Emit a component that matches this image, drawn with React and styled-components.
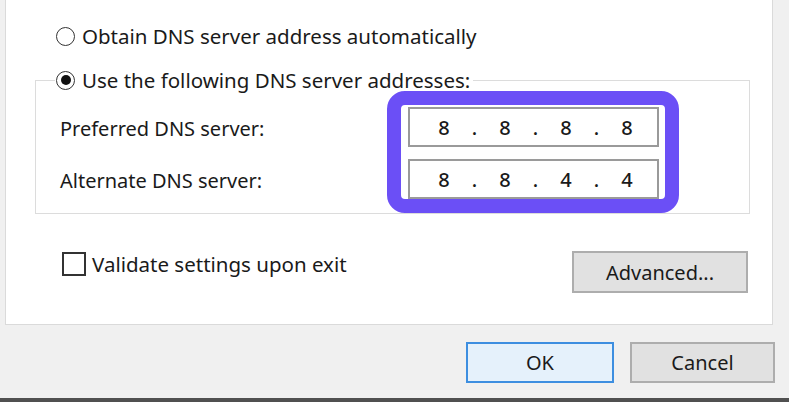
import React from 'react';
import styled, { createGlobalStyle } from 'styled-components';

const GlobalStyle = createGlobalStyle`
    html, body {
        margin: 0;
        padding: 0;
        background: #f0f0f0;
    }
    body {
        font-family: "Noto Sans", "Open Sans", sans-serif;
        color: #1a1a1a;
    }
`;

const Window = styled.div`
    width: 789px;
    height: 402px;
    display: flex;
    flex-direction: column;
    overflow: hidden;
    background: #f0f0f0;

    & > * {
        flex-shrink: 0;
    }
`;

const Panel = styled.div`
    margin-left: 5px;
    width: 768px;
    height: 325px;
    box-sizing: border-box;
    background: #ffffff;
    border: 1px solid #dadada;
    border-top: none;
    display: flex;
    flex-direction: column;
`;

const OptionRow = styled.label`
    display: flex;
    align-items: center;
    height: 24px;
    font-size: 20.5px;
    white-space: nowrap;
`;

const FirstOption = styled(OptionRow)`
    margin-top: 24px;
    margin-left: 50px;
`;

const Radio = styled.span`
    width: 19px;
    height: 19px;
    box-sizing: border-box;
    border-radius: 50%;
    border: 1.5px solid #333;
    margin-right: 7px;
    display: flex;
    align-items: center;
    justify-content: center;
    flex-shrink: 0;

    &::after {
        content: '';
        width: 10px;
        height: 10px;
        border-radius: 50%;
        background: ${p => (p.$checked ? '#111' : 'transparent')};
    }
`;

const GroupBox = styled.div`
    margin-top: 32px;
    margin-left: 29px;
    width: 715px;
    box-sizing: border-box;
    border: 1px solid #dcdcdc;
    padding: 0 0 14px 24px;
`;

const Legend = styled(OptionRow)`
    margin-top: -13px;
    margin-left: -5px;
    padding: 0 3px 0 1px;
    width: fit-content;
    background: #ffffff;
`;

const GroupBody = styled.div`
    margin-top: 15px;
    display: flex;
`;

const LabelColumn = styled.div`
    width: 348px;
    display: flex;
    flex-direction: column;
    gap: 12px;
`;

const FieldLabel = styled.div`
    height: 40px;
    display: flex;
    align-items: center;
    padding-top: 3px;
    box-sizing: border-box;
    font-size: 20px;
`;

const InputColumn = styled.div`
    position: relative;
    display: flex;
    flex-direction: column;
    gap: 12px;
`;

const IpInput = styled.div`
    width: 251px;
    height: 40px;
    box-sizing: border-box;
    border: 2px solid #9a9a9a;
    background: #ffffff;
    display: flex;
    align-items: center;
    padding-left: 12px;
    font-size: 20px;
    font-weight: 500;
`;

const Octet = styled.span`
    width: 44px;
    text-align: center;
`;

const Dot = styled.span`
    width: 17px;
    text-align: center;
`;

const Highlight = styled.div`
    position: absolute;
    left: -21px;
    top: -16px;
    width: 292px;
    height: 122px;
    box-sizing: border-box;
    border: 14px solid #6b4ff6;
    border-radius: 18px;
    pointer-events: none;
`;

const BottomRow = styled.div`
    margin-top: 37px;
    display: flex;
    align-items: flex-start;
    padding-right: 24px;
`;

const CheckOption = styled.label`
    margin-left: 56px;
    height: 26px;
    display: flex;
    align-items: center;
    font-size: 20.5px;
`;

const CheckBox = styled.span`
    width: 24px;
    height: 24px;
    box-sizing: border-box;
    border: 2px solid #333;
    margin-right: 6px;
`;

const Button = styled.button`
    height: ${p => p.$height || 41}px;
    width: ${p => p.$width}px;
    box-sizing: border-box;
    font-family: inherit;
    font-size: 20px;
    color: #1a1a1a;
    background: ${p => (p.$primary ? '#e5f1fb' : '#e1e1e1')};
    border: 2px solid ${p => (p.$primary ? '#3d8ee0' : '#adadad')};
    padding: 0;
`;

const AdvancedButton = styled(Button)`
    margin-left: auto;
`;

const ButtonBar = styled.div`
    margin-top: 17px;
    display: flex;
    justify-content: flex-end;
    gap: 16px;
    padding-right: 14px;
`;

const TaskEdge = styled.div`
    margin-top: 15px;
    height: 4px;
    background: #505050;
`;

const IpField = ({ octets }) => (
    <IpInput>
        {octets.map((o, i) => (
            <React.Fragment key={i}>
                {i > 0 && <Dot>.</Dot>}
                <Octet>{o}</Octet>
            </React.Fragment>
        ))}
    </IpInput>
);

const App = () => {
    return (
        <Window>
            <GlobalStyle />
            <Panel>
                <FirstOption>
                    <Radio />
                    Obtain DNS server address automatically
                </FirstOption>
                <GroupBox>
                    <Legend>
                        <Radio $checked />
                        Use the following DNS server addresses:
                    </Legend>
                    <GroupBody>
                        <LabelColumn>
                            <FieldLabel>Preferred DNS server:</FieldLabel>
                            <FieldLabel>Alternate DNS server:</FieldLabel>
                        </LabelColumn>
                        <InputColumn>
                            <IpField octets={['8', '8', '8', '8']} />
                            <IpField octets={['8', '8', '4', '4']} />
                            <Highlight />
                        </InputColumn>
                    </GroupBody>
                </GroupBox>
                <BottomRow>
                    <CheckOption>
                        <CheckBox />
                        Validate settings upon exit
                    </CheckOption>
                    <AdvancedButton $width={176} $height={42}>Advanced...</AdvancedButton>
                </BottomRow>
            </Panel>
            <ButtonBar>
                <Button $primary $width={148}>OK</Button>
                <Button $width={145}>Cancel</Button>
            </ButtonBar>
            <TaskEdge />
        </Window>
    );
};

export default App;
